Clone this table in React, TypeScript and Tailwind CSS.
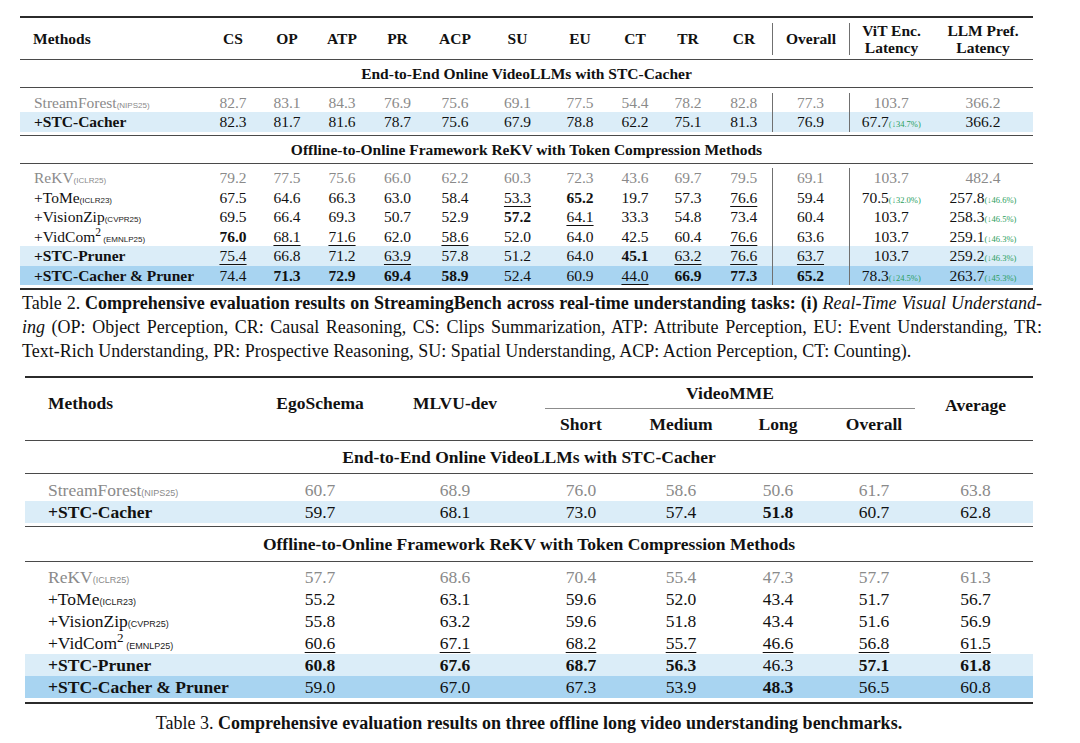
import clsx from 'clsx'

type Kind = 'base' | 'plain' | 'light' | 'dark'
type Row = { name: string; sup?: string; tag?: string; kind: Kind; vals: string[] }

// "*x" bold, "_x" underlined, "x|p" adds a green (↓p%) note
const streamRows1: Row[] = [
  { name: 'StreamForest', tag: 'NIPS25', kind: 'base', vals: ['82.7', '83.1', '84.3', '76.9', '75.6', '69.1', '77.5', '54.4', '78.2', '82.8', '77.3', '103.7', '366.2'] },
  { name: '+STC-Cacher', kind: 'light', vals: ['82.3', '81.7', '81.6', '78.7', '75.6', '67.9', '78.8', '62.2', '75.1', '81.3', '76.9', '67.7|34.7', '366.2'] },
]

const rekvRows1: Row[] = [
  { name: 'ReKV', tag: 'ICLR25', kind: 'base', vals: ['79.2', '77.5', '75.6', '66.0', '62.2', '60.3', '72.3', '43.6', '69.7', '79.5', '69.1', '103.7', '482.4'] },
  { name: '+ToMe', tag: 'ICLR23', kind: 'plain', vals: ['67.5', '64.6', '66.3', '63.0', '58.4', '_53.3', '*65.2', '19.7', '57.3', '_76.6', '59.4', '70.5|32.0', '257.8|46.6'] },
  { name: '+VisionZip', tag: 'CVPR25', kind: 'plain', vals: ['69.5', '66.4', '69.3', '50.7', '52.9', '*57.2', '_64.1', '33.3', '54.8', '73.4', '60.4', '103.7', '258.3|46.5'] },
  { name: '+VidCom', sup: '2', tag: 'EMNLP25', kind: 'plain', vals: ['*76.0', '_68.1', '_71.6', '62.0', '_58.6', '52.0', '64.0', '42.5', '60.4', '_76.6', '63.6', '103.7', '259.1|46.3'] },
  { name: '+STC-Pruner', kind: 'light', vals: ['_75.4', '66.8', '71.2', '_63.9', '57.8', '51.2', '64.0', '*45.1', '_63.2', '_76.6', '_63.7', '103.7', '259.2|46.3'] },
  { name: '+STC-Cacher & Pruner', kind: 'dark', vals: ['74.4', '*71.3', '*72.9', '*69.4', '*58.9', '52.4', '60.9', '_44.0', '*66.9', '*77.3', '*65.2', '78.3|24.5', '263.7|45.3'] },
]

const streamRows2: Row[] = [
  { name: 'StreamForest', tag: 'NIPS25', kind: 'base', vals: ['60.7', '68.9', '76.0', '58.6', '50.6', '61.7', '63.8'] },
  { name: '+STC-Cacher', kind: 'light', vals: ['59.7', '68.1', '73.0', '57.4', '*51.8', '60.7', '62.8'] },
]

const rekvRows2: Row[] = [
  { name: 'ReKV', tag: 'ICLR25', kind: 'base', vals: ['57.7', '68.6', '70.4', '55.4', '47.3', '57.7', '61.3'] },
  { name: '+ToMe', tag: 'ICLR23', kind: 'plain', vals: ['55.2', '63.1', '59.6', '52.0', '43.4', '51.7', '56.7'] },
  { name: '+VisionZip', tag: 'CVPR25', kind: 'plain', vals: ['55.8', '63.2', '59.6', '51.8', '43.4', '51.6', '56.9'] },
  { name: '+VidCom', sup: '2', tag: 'EMNLP25', kind: 'plain', vals: ['_60.6', '_67.1', '_68.2', '_55.7', '_46.6', '_56.8', '_61.5'] },
  { name: '+STC-Pruner', kind: 'light', vals: ['*60.8', '*67.6', '*68.7', '*56.3', '46.3', '*57.1', '*61.8'] },
  { name: '+STC-Cacher & Pruner', kind: 'dark', vals: ['59.0', '67.0', '67.3', '53.9', '*48.3', '56.5', '60.8'] },
]

const band: Record<Kind, string> = {
  base: 'text-[#8a8a8a]',
  plain: 'text-[#111]',
  light: 'bg-[#dbedf8] text-[#111]',
  dark: 'bg-[#a8d4f1] text-[#111]',
}

function Value({ s }: { s: string }) {
  const [raw, pct] = s.split('|')
  const bold = raw.startsWith('*')
  const under = raw.startsWith('_')
  const text = bold || under ? raw.slice(1) : raw
  return (
    <>
      <span className={clsx(bold && 'font-bold', under && 'underline decoration-1 underline-offset-[3px]')}>
        {text}
      </span>
      {pct && <span className="text-[8.5px] leading-none text-[#2a9d5c]">(↓{pct}%)</span>}
    </>
  )
}

function Label({ row, tagSize }: { row: Row; tagSize: string }) {
  const strong = row.kind === 'light' || row.kind === 'dark'
  return (
    <span className={clsx(strong && 'font-bold')}>
      {row.name}
      {row.sup && <sup>{row.sup}</sup>}
      {row.tag && (
        <span
          className={clsx(
            "[font-family:'Liberation_Sans',Arial,sans-serif] font-normal leading-none",
            tagSize,
            row.kind === 'base' ? 'text-[#8a8a8a]' : 'text-[#222]',
          )}
        >
          {row.sup ? '\u00a0' : ''}({row.tag})
        </span>
      )}
    </span>
  )
}

function Rule({ span, h }: { span: number; h: string }) {
  return (
    <tr>
      <td colSpan={span} className={clsx('p-0', h, h === 'h-[2px]' ? 'bg-[#2b2b2b]' : 'bg-[#4a4a4a]')} />
    </tr>
  )
}

function Gap({ span, h }: { span: number; h: string }) {
  return (
    <tr>
      <td colSpan={span} className={clsx('p-0', h)} />
    </tr>
  )
}

function StreamTable() {
  const tasks = ['CS', 'OP', 'ATP', 'PR', 'ACP', 'SU', 'EU', 'CT', 'TR', 'CR']
  const rows = (list: Row[]) =>
    list.map((r) => (
      <tr key={r.name} className={clsx('h-[19.5px]', band[r.kind])}>
        <td className="h-[19.5px] whitespace-nowrap p-0 pl-[14px] text-left leading-[19.5px]">
          <Label row={r} tagSize="text-[8px]" />
        </td>
        {r.vals.map((v, i) => (
          <td
            key={i}
            className={clsx(
              'h-[19.5px] whitespace-nowrap p-0 text-center leading-[19.5px]',
              (i === 10 || i === 11) && 'border-l border-[#707070]',
            )}
          >
            <Value s={v} />
          </td>
        ))}
      </tr>
    ))

  return (
    <table className="w-[1013px] table-fixed border-collapse text-[15.5px]">
      <colgroup>
        <col className="w-[186px]" />
        <col className="w-[54px]" />
        <col className="w-[54px]" />
        <col className="w-[56px]" />
        <col className="w-[55px]" />
        <col className="w-[60px]" />
        <col className="w-[65px]" />
        <col className="w-[60px]" />
        <col className="w-[50px]" />
        <col className="w-[56px]" />
        <col className="w-[56px]" />
        <col className="w-[77px]" />
        <col className="w-[84px]" />
        <col className="w-[100px]" />
      </colgroup>
      <tbody>
        <Rule span={14} h="h-[2px]" />
        <tr className="h-[41px] text-[#111]">
          <th className="p-0 pl-[13px] text-left font-bold">Methods</th>
          {tasks.map((t) => (
            <th key={t} className="p-0 text-center font-bold">
              {t}
            </th>
          ))}
          <th className="p-0 font-bold">
            <div className="flex h-[32px] items-center justify-center border-l border-[#707070]">Overall</div>
          </th>
          <th className="p-0 font-bold">
            <div className="flex h-[32px] flex-col items-center justify-center border-l border-[#707070] leading-[17px]">
              <span>ViT Enc.</span>
              <span>Latency</span>
            </div>
          </th>
          <th className="p-0 font-bold">
            <div className="flex h-[32px] flex-col items-center justify-center leading-[17px]">
              <span>LLM Pref.</span>
              <span>Latency</span>
            </div>
          </th>
        </tr>
        <Rule span={14} h="h-[1px]" />
        <tr className="h-[27px] text-[#111]">
          <td colSpan={14} className="p-0 text-center font-bold">
            End-to-End Online VideoLLMs with STC-Cacher
          </td>
        </tr>
        <Rule span={14} h="h-[1px]" />
        <Gap span={14} h="h-[4.5px]" />
        {rows(streamRows1)}
        <Gap span={14} h="h-[3.5px]" />
        <Rule span={14} h="h-[1px]" />
        <tr className="h-[27px] text-[#111]">
          <td colSpan={14} className="p-0 text-center font-bold">
            Offline-to-Online Framework ReKV with Token Compression Methods
          </td>
        </tr>
        <Rule span={14} h="h-[1px]" />
        <Gap span={14} h="h-[4px]" />
        {rows(rekvRows1)}
        <Gap span={14} h="h-[3px]" />
        <Rule span={14} h="h-[2px]" />
      </tbody>
    </table>
  )
}

function OfflineTable() {
  const rows = (list: Row[]) =>
    list.map((r) => (
      <tr key={r.name} className={clsx('h-[22px]', band[r.kind])}>
        <td className="h-[22px] whitespace-nowrap p-0 pl-[23px] text-left leading-[22px]">
          <Label row={r} tagSize="text-[9px]" />
        </td>
        {r.vals.map((v, i) => (
          <td key={i} className="h-[22px] whitespace-nowrap p-0 text-center leading-[22px]">
            <Value s={v} />
          </td>
        ))}
      </tr>
    ))

  return (
    <table className="w-[1008px] table-fixed border-collapse text-[17.5px]">
      <colgroup>
        <col className="w-[231px]" />
        <col className="w-[128px]" />
        <col className="w-[142px]" />
        <col className="w-[110px]" />
        <col className="w-[90px]" />
        <col className="w-[104px]" />
        <col className="w-[88px]" />
        <col className="w-[115px]" />
      </colgroup>
      <tbody>
        <Rule span={8} h="h-[2px]" />
        <tr className="h-[31px] text-[#111]">
          <th rowSpan={2} className="p-0 pb-[12px] pl-[23px] text-left font-bold">
            Methods
          </th>
          <th rowSpan={2} className="p-0 pb-[12px] text-center font-bold">
            EgoSchema
          </th>
          <th rowSpan={2} className="p-0 pb-[12px] text-center font-bold">
            MLVU-dev
          </th>
          <th colSpan={4} className="p-0 align-bottom font-bold">
            <div className="ml-[19px] mr-[3px] flex h-[31px] items-center justify-center border-b border-[#8c8c8c]">
              VideoMME
            </div>
          </th>
          <th rowSpan={2} className="p-0 pb-[8px] text-center font-bold">
            Average
          </th>
        </tr>
        <tr className="h-[31px] text-[#111]">
          <th className="p-0 text-center font-bold">Short</th>
          <th className="p-0 text-center font-bold">Medium</th>
          <th className="p-0 text-center font-bold">Long</th>
          <th className="p-0 text-center font-bold">Overall</th>
        </tr>
        <Rule span={8} h="h-[1px]" />
        <tr className="h-[32px] text-[#111]">
          <td colSpan={8} className="p-0 text-center font-bold">
            End-to-End Online VideoLLMs with STC-Cacher
          </td>
        </tr>
        <Rule span={8} h="h-[1px]" />
        <Gap span={8} h="h-[5px]" />
        {rows(streamRows2)}
        <Gap span={8} h="h-[3px]" />
        <Rule span={8} h="h-[1px]" />
        <tr className="h-[34px] text-[#111]">
          <td colSpan={8} className="p-0 text-center font-bold">
            Offline-to-Online Framework ReKV with Token Compression Methods
          </td>
        </tr>
        <Rule span={8} h="h-[1px]" />
        <Gap span={8} h="h-[4px]" />
        {rows(rekvRows2)}
        <Gap span={8} h="h-[4px]" />
        <Rule span={8} h="h-[2px]" />
      </tbody>
    </table>
  )
}

export default function App() {
  return (
    <div className="min-h-[743px] w-[1080px] bg-white text-[#111] [font-family:'Liberation_Serif','Times_New_Roman',serif]">
      <div className="pl-[20px] pt-[16px]">
        <StreamTable />
      </div>

      <div className="ml-[22px] mt-[1px] w-[1020px] text-[18px] leading-[24px]">
        <div className="whitespace-nowrap text-justify [text-align-last:justify]">
          Table 2.{' '}
          <b>Comprehensive evaluation results on StreamingBench across real-time understanding tasks: (i)</b>{' '}
          <i>Real-Time Visual Understand-</i>
        </div>
        <div className="whitespace-nowrap text-justify [text-align-last:justify]">
          <i>ing</i> (OP: Object Perception, CR: Causal Reasoning, CS: Clips Summarization, ATP: Attribute
          Perception, EU: Event Understanding, TR:
        </div>
        <div className="whitespace-nowrap">
          Text-Rich Understanding, PR: Prospective Reasoning, SU: Spatial Understanding, ACP: Action Perception,
          CT: Counting).
        </div>
      </div>

      <div className="pl-[25px] pt-[13px]">
        <OfflineTable />
        <p className="mt-[7px] w-[1008px] text-center text-[18px] leading-[24px]">
          Table 3. <b>Comprehensive evaluation results on three offline long video understanding benchmarks.</b>
        </p>
      </div>
    </div>
  )
}
